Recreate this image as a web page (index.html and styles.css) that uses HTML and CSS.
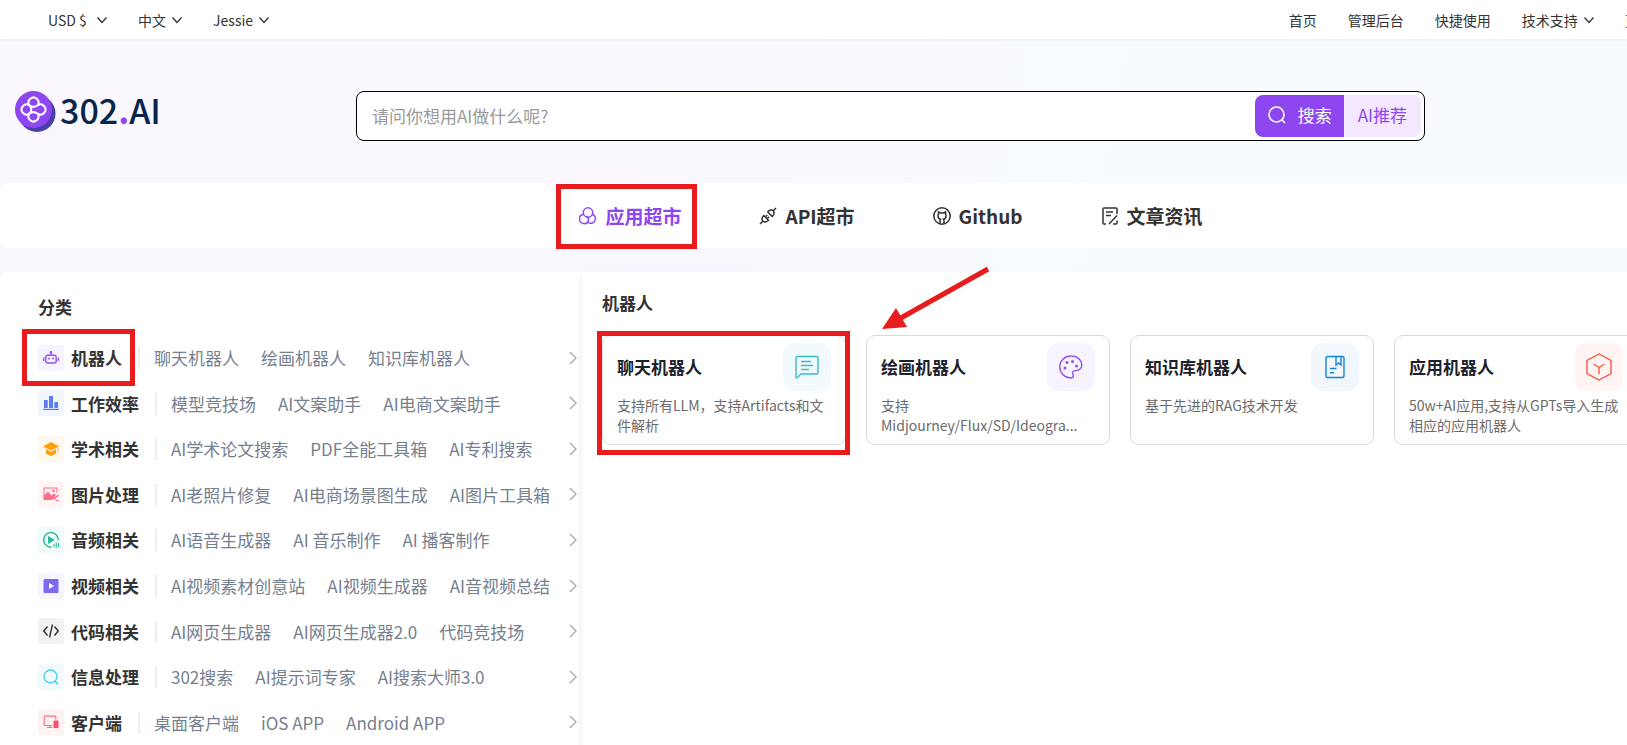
FILE: index.html
```html
<!DOCTYPE html>
<html lang="zh">

<head>
    <meta charset="utf-8">
    <title>302.AI</title>
    <link rel="stylesheet" href="styles.css">
</head>

<body>
    <svg class="defs">
        <symbol id="down" viewBox="0 0 10 10"><path d="M0.5 2.5 L5 7.5 L9.500 2.500"/></symbol>
        <symbol id="right" viewBox="0 0 8 14"><path d="M1 1 L7 7 L1 13"/></symbol>
    </svg>
    <div class="page">
        <div class="topbar">
            <nav class="topleft">
                <a href="#">USD $ <svg class="down wide"><use href="#down"/></svg></a>
                <a href="#">中文 <svg class="down"><use href="#down"/></svg></a>
                <a href="#">Jessie <svg class="down"><use href="#down"/></svg></a>
            </nav>
            <nav class="topright">
                <a href="#">首页</a>
                <a href="#">管理后台</a>
                <a href="#">快捷使用</a>
                <a href="#">技术支持 <svg class="down"><use href="#down"/></svg></a>
                <a href="#">更多</a>
            </nav>
        </div>

        <header class="header">
            <a class="logo" href="#">
                <svg viewBox="0 0 41 41">
                    <circle cx="22" cy="22.500" r="18.500" fill="#4a3fa8"/>
                    <circle cx="18.500" cy="18.500" r="18.500" fill="#8e47f0"/>
                    <path d="M14.300 14.300 A5 5 0 1 1 22.700 14.300 A5 5 0 1 1 22.700 22.700 A5 5 0 1 1 14.300 22.700 A5 5 0 1 1 14.300 14.300 Q18.500 18.500 14.300 22.700 M14.300 14.300 Q18.500 17.500 22.700 14.300 M14.300 22.700 Q18.500 19.500 22.700 22.700" fill="none" stroke="#fff" stroke-width="2" stroke-linecap="round"/>
                </svg>
                <span>302<b>.</b>AI</span>
            </a>
            <form class="search">
                <input type="text" aria-label="搜索" placeholder="请问你想用AI做什么呢?">
                <button type="button" class="go">
                    <svg viewBox="0 0 18 18"><circle cx="8.500" cy="8.500" r="7.500"/><path d="M14 14 L17 17"/></svg>
                    搜索
                </button>
                <button type="button" class="rec">AI推荐</button>
            </form>
        </header>

        <nav class="tabs">
            <a href="#" class="active marked">
                <svg viewBox="0 0 18 18"><circle cx="9" cy="5.500" r="4.700"/><path d="M4.500 7.300 A4.700 4.700 0 1 0 9.600 13.500 Q9.500 10.500 7.300 9"/><path d="M13.500 7.300 A4.700 4.700 0 1 1 9 15.500"/></svg>
                应用超市
            </a>
            <a href="#">
                <svg viewBox="0 0 18 18"><path d="M1 17 L3.800 14.200 M14.300 3.700 L17 1 M3.800 14.200 Q1.800 11.500 4.800 8.500 L9.500 13.200 Q6.500 16.200 3.800 14.200 M8.500 4.800 L13.200 9.500 Q16.200 6.500 14.300 3.700 Q11.500 1.800 8.500 4.800 M6.300 10 L8.300 8 M8 11.700 L10 9.700"/></svg>
                API超市
            </a>
            <a href="#">
                <svg viewBox="0 0 18 18"><circle cx="9" cy="9" r="8.200"/><path d="M7 17 V14 Q7 12.800 7.500 12.300 Q4.800 11.500 5 8.500 Q5 7.500 5.500 6.800 L5.500 5 L7.500 6 H10.500 L12.500 5 L12.500 6.800 Q13 7.500 13 8.500 Q13.200 11.500 10.500 12.300 Q11 12.800 11 14 V17"/></svg>
                Github
            </a>
            <a href="#">
                <svg viewBox="0 0 18 18"><path d="M5 17 H3 Q2 17 2 16 V2 Q2 1 3 1 H15 Q16 1 16 2 V7 M5 5 H12 M5 8.500 H10 M8 17 L16 8.500 M12 17 H15 Q16 17 16 16 V13.500"/></svg>
                文章资讯
            </a>
        </nav>

        <main class="main">
            <aside class="side">
                <h2>分类</h2>
                <ul>
                    <li>
                        <span class="ico robot"><svg viewBox="0 0 16 16"><g fill="none" stroke="#9152f0" stroke-width="1.400"><rect x="2.800" y="5.200" width="10.400" height="7.800" rx="2"/><path d="M8 5 V2.500 M0.700 7.500 V11 M15.300 7.500 V11"/></g><g fill="#9152f0"><circle cx="8" cy="2.300" r="1.300"/><circle cx="6" cy="8.500" r="1"/><circle cx="10" cy="8.500" r="1"/></g></svg></span>
                        <b class="marked">机器人</b>
                        <div class="links"><a href="#">聊天机器人</a><a href="#">绘画机器人</a><a href="#">知识库机器人</a></div>
                        <svg class="more"><use href="#right"/></svg>
                    </li>
                    <li>
                        <span class="ico work"><svg viewBox="0 0 16 16" fill="#5b7cf5"><path d="M1 5 H4.700 V13 H1 Z M6 1 H10 V13 H6 Z M11.300 7 H15 V13 H11.300 Z M0 13.800 H16 V15 H0 Z"/></svg></span>
                        <b>工作效率</b>
                        <div class="links"><a href="#">模型竞技场</a><a href="#">AI文案助手</a><a href="#">AI电商文案助手</a></div>
                        <svg class="more"><use href="#right"/></svg>
                    </li>
                    <li>
                        <span class="ico study"><svg viewBox="0 0 16 16" fill="#ff9f0a"><path d="M8 1 L16 5.500 L8 9.500 L0 5.500 Z M3 8.300 L8 10.800 L13 8.300 V12.500 L8 15 L3 12.500 Z"/><path d="M14 7 H15.500 V12 H14 Z" opacity="0.500"/></svg></span>
                        <b>学术相关</b>
                        <div class="links"><a href="#">AI学术论文搜索</a><a href="#">PDF全能工具箱</a><a href="#">AI专利搜索</a></div>
                        <svg class="more"><use href="#right"/></svg>
                    </li>
                    <li>
                        <span class="ico image"><svg viewBox="0 0 16 16" fill="#fb6f8d"><path d="M0.500 1.500 H14.500 V7 H13.500 V2.500 H1.500 V9 L5 5.500 L8.500 9.500 L11 7.500 L13 9 L9 14 H0.500 Z"/><circle cx="10.500" cy="4.800" r="1.300"/><path d="M15 8.500 L16 9.500 L11.500 13.500 H10 V12.500 Z M13 14 H16 V15 H12 Z"/></svg></span>
                        <b>图片处理</b>
                        <div class="links"><a href="#">AI老照片修复</a><a href="#">AI电商场景图生成</a><a href="#">AI图片工具箱</a></div>
                        <svg class="more"><use href="#right"/></svg>
                    </li>
                    <li>
                        <span class="ico audio"><svg viewBox="0 0 16 16" fill="#27b99a"><path d="M8.500 15.200 A7.300 7.300 0 1 1 15.200 8.500" fill="none" stroke="#27b99a" stroke-width="1.400"/><path d="M5 4 L11.800 8 L5 12 Z M12.700 10.500 H13.800 V16 H12.700 Z M10.500 12 H11.500 V15 H10.500 Z M15 11 H16 V15 H15 Z"/></svg></span>
                        <b>音频相关</b>
                        <div class="links"><a href="#">AI语音生成器</a><a href="#">AI 音乐制作</a><a href="#">AI 播客制作</a></div>
                        <svg class="more"><use href="#right"/></svg>
                    </li>
                    <li>
                        <span class="ico video"><svg viewBox="0 0 16 16"><rect x="0.500" y="1" width="15" height="14" rx="1" fill="#8067f0"/><path d="M6 5 L11 8 L6 11 Z" fill="#fff"/></svg></span>
                        <b>视频相关</b>
                        <div class="links"><a href="#">AI视频素材创意站</a><a href="#">AI视频生成器</a><a href="#">AI音视频总结</a></div>
                        <svg class="more"><use href="#right"/></svg>
                    </li>
                    <li>
                        <span class="ico code"><svg viewBox="0 0 16 16" fill="none" stroke="#333" stroke-width="1.400"><path d="M4.500 3.500 L0.800 8 L4.500 12.500 M11.500 3.500 L15.200 8 L11.500 12.500 M9.500 1.500 L6.500 14.500"/></svg></span>
                        <b>代码相关</b>
                        <div class="links"><a href="#">AI网页生成器</a><a href="#">AI网页生成器2.0</a><a href="#">代码竞技场</a></div>
                        <svg class="more"><use href="#right"/></svg>
                    </li>
                    <li>
                        <span class="ico info"><svg viewBox="0 0 16 16" fill="none" stroke="#4ccbf2" stroke-width="1.400"><circle cx="7.500" cy="7.500" r="6.500"/><path d="M12 12 L15 15.500"/></svg></span>
                        <b>信息处理</b>
                        <div class="links"><a href="#">302搜索</a><a href="#">AI提示词专家</a><a href="#">AI搜索大师3.0</a></div>
                        <svg class="more"><use href="#right"/></svg>
                    </li>
                    <li>
                        <span class="ico client"><svg viewBox="0 0 16 16"><path d="M9.500 11.500 H2 Q1.200 11.500 1.200 10.500 V3 Q1.200 2.200 2 2.200 H12 Q12.800 2.200 12.800 3 V5.500 M4 13.500 H9.500 M7 11.500 V13.500" fill="none" stroke="#fb7285" stroke-width="1.200"/><rect x="10.500" y="6.500" width="5" height="7.500" rx="1" fill="#fb4f68"/></svg></span>
                        <b>客户端</b>
                        <div class="links"><a href="#">桌面客户端</a><a href="#">iOS APP</a><a href="#">Android APP</a></div>
                        <svg class="more"><use href="#right"/></svg>
                    </li>
                </ul>
            </aside>

            <section class="content">
                <h2>机器人</h2>
                <div class="cards">
                    <a href="#" class="card marked">
                        <div class="head">
                            <h3>聊天机器人</h3>
                            <span class="pic chat"><svg viewBox="0 0 24 24"><path d="M1 22.500 V3 Q1 1.500 2.500 1.500 H21.500 Q23 1.500 23 3 V17.500 Q23 19 21.500 19 H6 L2.500 22.500 Q1 23.500 1 22.500 M6 6.500 H16 M6 10.500 H18 M6 14.500 H14"/></svg></span>
                        </div>
                        <p>支持所有LLM，支持Artifacts和文件解析</p>
                    </a>
                    <a href="#" class="card">
                        <div class="head">
                            <h3>绘画机器人</h3>
                            <span class="pic draw"><svg viewBox="0 0 24 24"><path d="M12 1 Q19 1 22 6.500 Q24.500 14 18 15.500 Q14 15.500 13.500 17.500 Q13.500 19 14.500 20.500 Q14.500 23 11.500 23 A11 11 0 0 1 12 1 Z"/><g fill="#9152f0" stroke="none"><circle cx="6" cy="13" r="1.500"/><circle cx="8" cy="7.500" r="1.500"/><circle cx="13.500" cy="6.500" r="1.500"/><circle cx="17.500" cy="11" r="1.500"/></g></svg></span>
                        </div>
                        <p>支持<br>Midjourney/Flux/SD/Ideogra...</p>
                    </a>
                    <a href="#" class="card">
                        <div class="head">
                            <h3>知识库机器人</h3>
                            <span class="pic know"><svg viewBox="0 0 24 24"><rect x="3" y="1.500" width="18" height="21" rx="1.500"/><path d="M13 1.500 V10 L15.500 8 L18 10 V1.500 M7 13.500 H13.500 M7 17.800 H11"/></svg></span>
                        </div>
                        <p>基于先进的RAG技术开发</p>
                    </a>
                    <a href="#" class="card">
                        <div class="head">
                            <h3>应用机器人</h3>
                            <span class="pic app"><svg viewBox="0 0 28 28"><path d="M14 1 L26 7.500 V20.500 L14 27 L2 20.500 V7.500 Z M8.500 11 L14 14.500 L19.500 11 M14 14.500 V21"/></svg></span>
                        </div>
                        <p>50w+AI应用,支持从GPTs导入生成相应的应用机器人</p>
                    </a>
                </div>
                <svg class="arrow" viewBox="0 0 110 64">
                    <path d="M107 3 L18 53" stroke="#e81c1c" stroke-width="5" fill="none"/>
                    <path d="M1 63 L15 42 L26 61 Z" fill="#e81c1c"/>
                </svg>
            </section>
        </main>
    </div>
</body>

</html>
```
FILE: styles.css
```css
* {
    box-sizing: border-box;
}

html {
    overflow: hidden;
}

body {
    margin: 0;
    font-family: "Noto Sans CJK SC", "Noto Sans", sans-serif;
    font-size: 14px;
    color: #333;
}

a {
    color: inherit;
    text-decoration: none;
}

h2, h3, p, ul {
    margin: 0;
    padding: 0;
}

.defs {
    display: none;
}

.page {
    display: flex;
    flex-direction: column;
    min-width: 1780px;
    min-height: 100vh;
    background: linear-gradient(100deg, #faf7ff 35%, #f7fbff 60%);
}

/* top bar */
.topbar {
    display: flex;
    justify-content: space-between;
    height: 39px;
    padding: 0 127px 0 48px;
    background: #fff;
    box-shadow: 0 1px 3px rgba(0, 0, 0, 0.06);
}

.topleft,
.topright {
    display: flex;
    align-items: center;
    gap: 31px;
}

.topbar a {
    display: flex;
    align-items: center;
    gap: 3px;
    white-space: pre;
}

.topright a:last-child {
    width: 28px;
}

.down {
    width: 10px;
    height: 10px;
    fill: none;
    stroke: #333;
    stroke-width: 1.3;
}

.wide {
    margin-left: 4px;
}

/* logo and search */
.header {
    display: grid;
    grid-template-columns: 341px 1fr;
    align-items: start;
    padding: 52px 355px 42px 15px;
}

.logo {
    display: flex;
    align-items: center;
    gap: 4px;
    height: 41px;
    font-size: 34px;
    font-weight: 500;
    line-height: 38px;
    color: #08254d;
}

.logo svg {
    width: 41px;
    height: 41px;
}

.logo span {
    padding-bottom: 3px;
}

.logo b {
    color: #8e47f0;
}

.search {
    display: flex;
    height: 50px;
    padding: 3px;
    border: 1px solid #000;
    border-radius: 8px;
    background: #fff;
}

.search input {
    flex: 1;
    padding: 0 12px 2px;
    border: 0;
    outline: 0;
    background: none;
    font: inherit;
    font-size: 17px;
}

.search input::placeholder {
    color: #999;
}

.search button {
    border: 0;
    font: inherit;
    font-size: 17px;
}

.go {
    display: flex;
    align-items: center;
    gap: 12px;
    padding: 0 12px 4px 13px;
    border-radius: 8px 0 0 8px;
    background: #8e47f0;
    color: #fff;
}

.go svg {
    width: 18px;
    height: 18px;
    margin-top: 2px;
    fill: none;
    stroke: #fff;
    stroke-width: 1.6;
}

.rec {
    padding: 0 14px 4px;
    border-radius: 0 8px 8px 0;
    background: #f4e8ff;
    color: #8e47f0;
}

/* main tabs */
.tabs {
    display: flex;
    justify-content: center;
    align-items: center;
    gap: 78px;
    height: 65px;
    padding-left: 2px;
    border-radius: 8px;
    background: #fff;
}

.tabs a {
    position: relative;
    display: flex;
    align-items: center;
    gap: 8px;
    font-size: 19px;
    font-weight: bold;
}

.tabs svg {
    width: 18px;
    height: 18px;
    fill: none;
    stroke: currentColor;
    stroke-width: 1.5;
}

.tabs .active {
    color: #8e47f0;
}

/* red highlight frames */
.marked {
    position: relative;
}

.marked::after {
    content: "";
    position: absolute;
    border: 5px solid #e81c1c;
    pointer-events: none;
}

.tabs .marked::after {
    inset: -18px -16px -20px -23px;
}

.side .marked::after {
    inset: -16px -13px -16px -49px;
}

.card.marked::after {
    inset: -5px -5px -11px -6px;
}

/* panels */
.main {
    display: grid;
    grid-template-columns: 582px 1fr;
    flex: 1;
    margin-top: 24px;
    border-radius: 8px 0 0 0;
    background: #fff;
}

.side {
    display: flex;
    flex-direction: column;
    padding: 22px 5px 0 38px;
}

h2 {
    font-size: 17px;
    line-height: 26px;
}

.side ul {
    display: grid;
    grid-auto-rows: 1fr;
    flex: 1;
    margin-top: 15px;
    list-style: none;
}

.side li {
    display: flex;
    align-items: center;
    font-size: 17px;
    line-height: 25px;
    white-space: nowrap;
}

.ico {
    display: flex;
    width: 26px;
    height: 26px;
    margin-right: 7px;
    padding: 5px;
    border-radius: 3px;
}

.ico svg {
    width: 16px;
    height: 16px;
}

.robot { background: #f7f3ff; }
.work { background: #f1f6ff; }
.study { background: #fff8ec; }
.image { background: #fff3f5; }
.audio { background: #f0faf8; }
.video { background: #f6f4ff; }
.code { background: #f2f2f2; }
.info { background: #f1fbff; }
.client { background: #fff2f3; }

.links {
    display: flex;
    gap: 22px;
    flex: 1;
    margin-left: 16px;
    color: #76808e;
}

.links::before {
    content: "";
    width: 2px;
    height: 22px;
    margin: 2px -8px 0 0;
    background: #eee;
}

.more {
    width: 8px;
    height: 14px;
    fill: none;
    stroke: #a3a8b0;
    stroke-width: 1.3;
}

.content {
    position: relative;
    padding: 18px 20px;
    border-radius: 8px 0 0 0;
    box-shadow: -2px 2px 4px rgba(0, 0, 0, 0.06);
}

.cards {
    display: grid;
    grid-template-columns: repeat(auto-fill, 244px);
    gap: 20px;
    margin-top: 19px;
}

.card {
    height: 110px;
    padding: 7px 14px;
    border: 1px solid #d9d9d9;
    border-radius: 9px;
}

.head {
    display: flex;
    justify-content: space-between;
    align-items: center;
    margin-bottom: 4px;
}

h3 {
    padding-bottom: 1px;
    font-size: 17px;
    color: #1c222c;
}

.card p {
    color: #6b6b6b;
    line-height: 20px;
}

.pic {
    display: flex;
    width: 48px;
    height: 48px;
    padding: 12px;
    border-radius: 12px;
}

.pic svg {
    width: 24px;
    height: 24px;
    fill: none;
    stroke-width: 1.4;
}

.chat { background: #f3fafd; stroke: #36bccb; }
.draw { background: #f8f4ff; stroke: #9152f0; }
.know { background: #f1f7fd; stroke: #1584d8; }
.app { background: #fff4f3; stroke: #fa5844; padding: 10px; }

.app svg {
    width: 28px;
    height: 28px;
}

.arrow {
    position: absolute;
    top: -6px;
    left: 299px;
    width: 110px;
    height: 64px;
}
```
